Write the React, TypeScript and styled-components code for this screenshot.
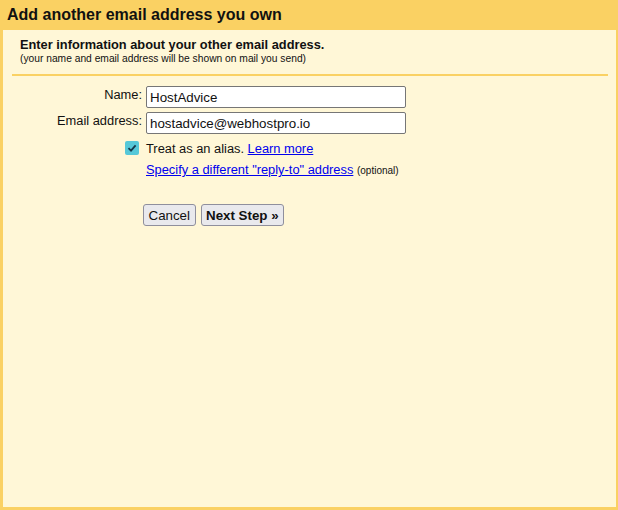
import styled, {createGlobalStyle} from 'styled-components'

const Global = createGlobalStyle`
    html, body {
        margin: 0;
        padding: 0;
        background: #fad163;
        font-family: "Liberation Sans", Arial, sans-serif;
    }
`
const Page = styled.div`
    width: 618px;
    height: 510px;
    display: flex;
    flex-direction: column;
    background: #fad163;
    box-sizing: border-box;
    padding: 0 2px 3px 3px;
`
const Title = styled.h1`
    margin: 0;
    height: 30px;
    box-sizing: border-box;
    padding: 6px 0 0 4px;
    font-size: 16px;
    line-height: 18px;
    font-weight: bold;
    color: #111;
`
const Panel = styled.div`
    flex: 1;
    background: #fff7d7;
    padding-top: 7px;
`
const Intro = styled.div`
    padding: 0 0 9px 8px;
    margin: 0 8px 0 9px;
    border-bottom: 2px solid #fad163;
`
const Heading = styled.div`
    font-size: 12.8px;
    line-height: 16px;
    font-weight: bold;
    color: #111;
`
const Sub = styled.div`
    font-size: 10.25px;
    line-height: 12px;
    color: #111;
`
const Form = styled.div`
    display: grid;
    grid-template-columns: 139px 260px;
    column-gap: 4px;
    row-gap: 4px;
    margin-top: 10px;
    font-size: 12.85px;
    color: #111;
`
const Label = styled.label`
    text-align: right;
    padding-top: 1px;
    line-height: 15px;
`
const Input = styled.input`
    box-sizing: border-box;
    height: 22px;
    width: 260px;
    margin: 0;
    padding: 1px 3px 0;
    border: 1px solid #767676;
    border-radius: 2px;
    background: #fff;
    font-family: "Liberation Sans", Arial, sans-serif;
    font-size: 13.33px;
    color: #111;
    outline: none;
`
const CheckCell = styled.div`
    display: flex;
    justify-content: flex-end;
    align-items: flex-start;
    padding-right: 3px;
    margin-top: 3px;
`
const Box = styled.span`
    width: 14px;
    height: 14px;
    border-radius: 2px;
    background: #56c8d8;
    display: flex;
    align-items: center;
    justify-content: center;
`
const Line = styled.div<{$top?: number}>`
    margin-top: ${p => p.$top ?? 0}px;
    line-height: 15px;
    white-space: nowrap;
`
const Link = styled.a`
    color: #0000ee;
    text-decoration: underline;
    cursor: pointer;
`
const Small = styled.span`
    font-size: 10px;
`
const Buttons = styled.div`
    display: flex;
    gap: 5px;
    margin: 26px 0 0 140px;
`
const Btn = styled.button<{$bold?: boolean}>`
    height: 22px;
    padding: 0 4.5px;
    margin: 0;
    border: 1px solid #8f8f9d;
    border-radius: 3px;
    background: #e9e9ed;
    font-family: "Liberation Sans", Arial, sans-serif;
    font-size: 13.33px;
    font-weight: ${p => (p.$bold ? 'bold' : 'normal')};
    color: #111;
`

export default function App() {
    return (
        <Page>
            <Global />
            <Title>Add another email address you own</Title>
            <Panel>
                <Intro>
                    <Heading>Enter information about your other email address.</Heading>
                    <Sub>(your name and email address will be shown on mail you send)</Sub>
                </Intro>
                <Form>
                    <Label htmlFor="name">Name:</Label>
                    <Input id="name" defaultValue="HostAdvice" />
                    <Label htmlFor="email">Email address:</Label>
                    <Input id="email" defaultValue="hostadvice@webhostpro.io" />
                    <CheckCell>
                        <Box>
                            <svg width="10" height="10" viewBox="0 0 10 10">
                                <path d="M1.5 5.2 L4 7.6 L8.6 2.4" fill="none" stroke="#15384a" strokeWidth="1.8" />
                            </svg>
                        </Box>
                    </CheckCell>
                    <Line $top={3}>
                        Treat as an alias. <Link>Learn more</Link>
                    </Line>
                    <span />
                    <Line $top={2}>
                        <Link>Specify a different "reply-to" address</Link> <Small>(optional)</Small>
                    </Line>
                </Form>
                <Buttons>
                    <Btn>Cancel</Btn>
                    <Btn $bold>Next Step »</Btn>
                </Buttons>
            </Panel>
        </Page>
    )
}
